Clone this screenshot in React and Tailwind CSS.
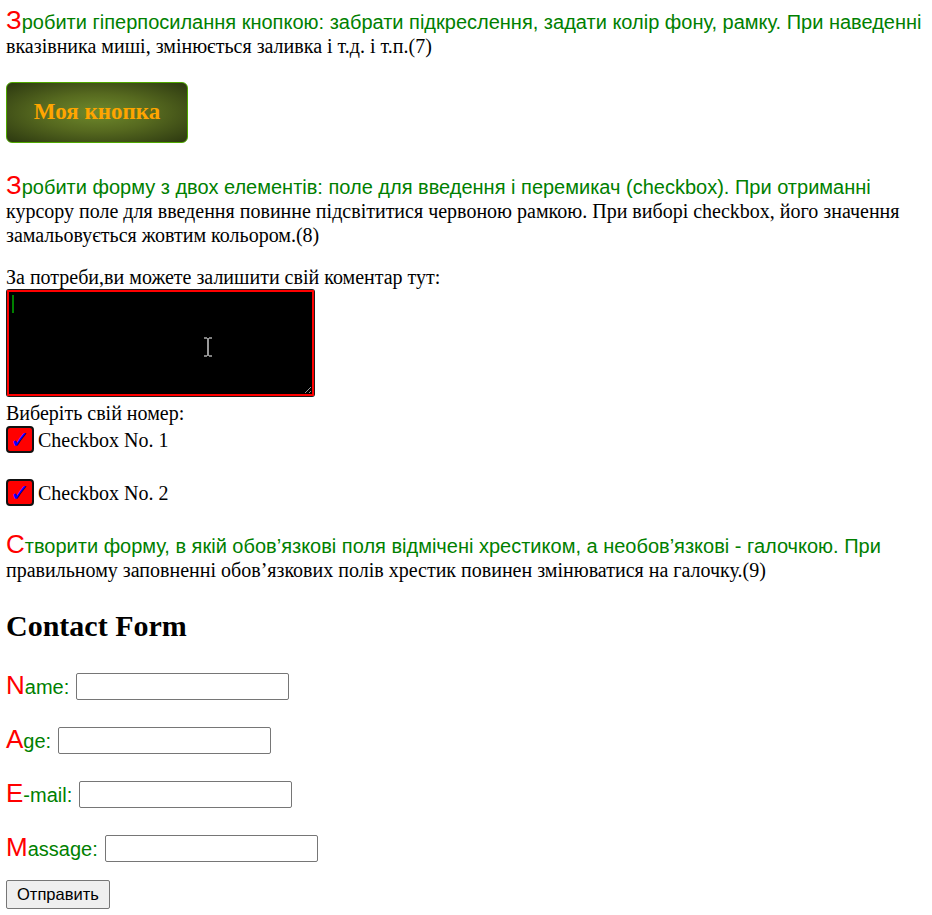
import React from 'react';

const serif = 'font-["Liberation_Serif","Times_New_Roman",serif]';

function TaskText({ children, className = '' }) {
  return (
    <p
      className={`text-[20px] leading-[24px] text-black ${serif} first-line:font-["Liberation_Sans",Arial,sans-serif] first-line:text-[#008000] first-letter:text-[26px] first-letter:text-[#ff0000] ${className}`}
    >
      {children}
    </p>
  );
}

function Check({ label }) {
  return (
    <label className="flex h-[27px] items-center gap-[4px]">
      <span className="flex h-[27px] w-[28px] items-center justify-center rounded-[4px] border-2 border-[#111] bg-[#ff0000] text-[24px] font-bold leading-none text-[#0000ff] font-['DejaVu_Sans',sans-serif]">
        ✓
      </span>
      <span className="text-[20px]">{label}</span>
    </label>
  );
}

function Field({ first, rest }) {
  return (
    <div className="flex h-[27px] items-center gap-[7px] font-['Liberation_Sans',Arial,sans-serif]">
      <span className="text-[20px] leading-[27px] text-[#008000]">
        <span className="text-[26px] text-[#ff0000]">{first}</span>
        {rest}
      </span>
      <input
        type="text"
        className="h-[27px] w-[213px] rounded-[2px] border border-[#767676] bg-white"
      />
    </div>
  );
}

export default function App() {
  return (
    <div className={`w-[932px] px-[6px] pt-[8px] ${serif} text-black bg-white`}>
      <TaskText>
        Зробити гіперпосилання кнопкою: забрати підкреслення, задати колір фону, рамку. При наведенні вказівника миші, змінюється заливка і т.д. і т.п.(7)
      </TaskText>

      <a
        href="#"
        className="mt-[24px] flex h-[61px] w-[182px] items-center justify-center rounded-[6px] border border-[#4fa800] bg-[radial-gradient(ellipse_at_center,#6f8a2c_0%,#56691f_45%,#2c3810_100%)] text-[23px] font-bold text-[#ffa500] no-underline"
      >
        Моя кнопка
      </a>

      <TaskText className="mt-[30px]">
        Зробити форму з двох елементів: поле для введення і перемикач (checkbox). При отриманні курсору поле для введення повинне підсвітитися червоною рамкою. При виборі checkbox, його значення замальовується жовтим кольором.(8)
      </TaskText>

      <div className="mt-[19px] text-[20px] leading-[23px]">За потреби,ви можете залишити свій коментар тут:</div>
      <div className="relative w-[309px] rounded-[3px] bg-[#1a1a1a] p-[1px]">
        <textarea className="block h-[106px] w-[307px] resize border-2 border-[#ff0000] bg-black outline-none" />
        <span className="absolute left-[6px] top-[6px] h-[18px] w-[2px] bg-[#008000]" />
        <svg className="absolute left-[197px] top-[48px]" width="10" height="20" viewBox="0 0 10 20">
          <path d="M1 1h3M6 1h3M5 1v18M1 19h3M6 19h3" stroke="#000" strokeWidth="3" fill="none" />
          <path d="M1 1h3M6 1h3M5 1v18M1 19h3M6 19h3" stroke="#fff" strokeWidth="1.2" fill="none" />
        </svg>
      </div>

      <div className="mt-[5px] text-[20px] leading-[23px]">Виберіть свій номер:</div>
      <div className="mt-[1px] flex flex-col gap-[26px]">
        <Check label="Checkbox No. 1" />
        <Check label="Checkbox No. 2" />
      </div>

      <TaskText className="mt-[26px]">
        Створити форму, в якій обов’язкові поля відмічені хрестиком, а необов’язкові - галочкою. При правильному заповненні обов’язкових полів хрестик повинен змінюватися на галочку.(9)
      </TaskText>

      <h2 className="mt-[26px] text-[30px] font-bold leading-[36px]">Contact Form</h2>

      <div className="mt-[29px] flex flex-col gap-[27px]">
        <Field first="N" rest="ame:" />
        <Field first="A" rest="ge:" />
        <Field first="E" rest="-mail:" />
        <Field first="M" rest="assage:" />
      </div>

      <button className="mt-[18px] h-[29px] rounded-[2px] border border-[#767676] bg-[#efefef] px-[10px] font-['Liberation_Sans',Arial,sans-serif] text-[16.5px] text-black">
        Отправить
      </button>
    </div>
  );
}
